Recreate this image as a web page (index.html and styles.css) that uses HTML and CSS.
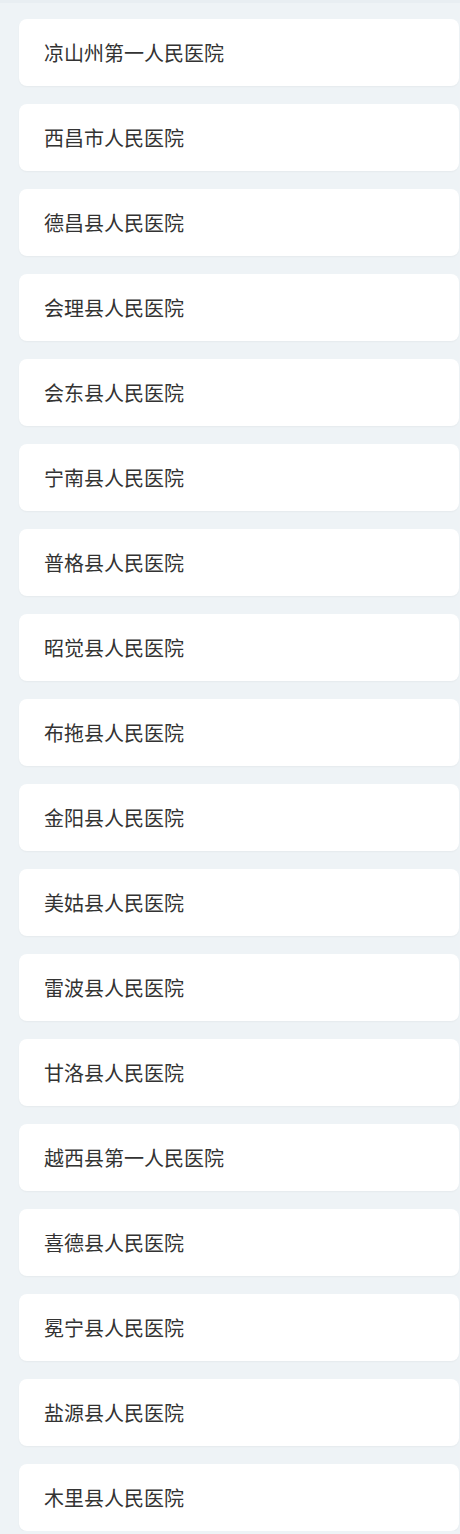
FILE: index.html
```html
<!DOCTYPE html>
<html lang="zh">
<head>
<meta charset="utf-8">
<link rel="stylesheet" href="styles.css">
</head>
<body>
<div class="page">
  <ul class="list">
    <li class="item">凉山州第一人民医院</li>
    <li class="item">西昌市人民医院</li>
    <li class="item">德昌县人民医院</li>
    <li class="item">会理县人民医院</li>
    <li class="item">会东县人民医院</li>
    <li class="item">宁南县人民医院</li>
    <li class="item">普格县人民医院</li>
    <li class="item">昭觉县人民医院</li>
    <li class="item">布拖县人民医院</li>
    <li class="item">金阳县人民医院</li>
    <li class="item">美姑县人民医院</li>
    <li class="item">雷波县人民医院</li>
    <li class="item">甘洛县人民医院</li>
    <li class="item">越西县第一人民医院</li>
    <li class="item">喜德县人民医院</li>
    <li class="item">冕宁县人民医院</li>
    <li class="item">盐源县人民医院</li>
    <li class="item">木里县人民医院</li>
  </ul>
</div>
</body>
</html>
```
FILE: styles.css
```css
html, body {
  margin: 0;
  padding: 0;
  background: #eef3f6;
}
.page {
  border-top: 3px solid #e8eef2;
  padding: 16px 1px 0 19px;
  font-family: "Noto Sans CJK SC", "Noto Sans", sans-serif;
}
.list {
  list-style: none;
  margin: 0;
  padding: 0;
  display: flex;
  flex-direction: column;
  gap: 18px;
}
.item {
  height: 67px;
  box-sizing: border-box;
  background: #ffffff;
  border-radius: 8px;
  box-shadow: 0 1px 2px rgba(0, 0, 0, 0.04);
  display: flex;
  align-items: center;
  padding-left: 25px;
  font-size: 20px;
  color: #333333;
  line-height: 1;
}
```
